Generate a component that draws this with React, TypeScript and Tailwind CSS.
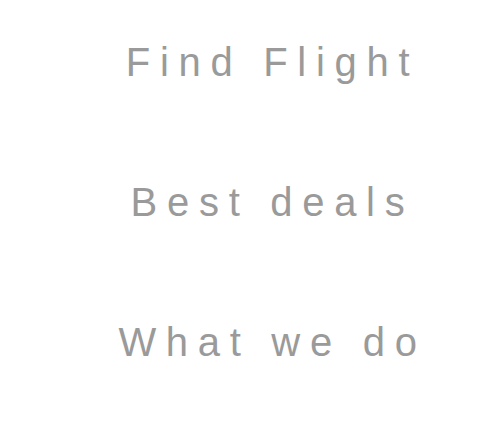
export default function App() {
  const items = ["Find Flight", "Best deals", "What we do"];
  return (
    <div className="w-[498px] h-[443px] bg-white">
      <ul className="flex flex-col gap-[95px] pt-[40px] pl-[47px] font-['Liberation_Sans',Arial,sans-serif]">
        {items.map((item) => (
          <li key={item} className="text-center text-[40px] leading-[45px] tracking-[9.7px] text-[#9a9a9a]">
            {item}
          </li>
        ))}
      </ul>
    </div>
  );
}
